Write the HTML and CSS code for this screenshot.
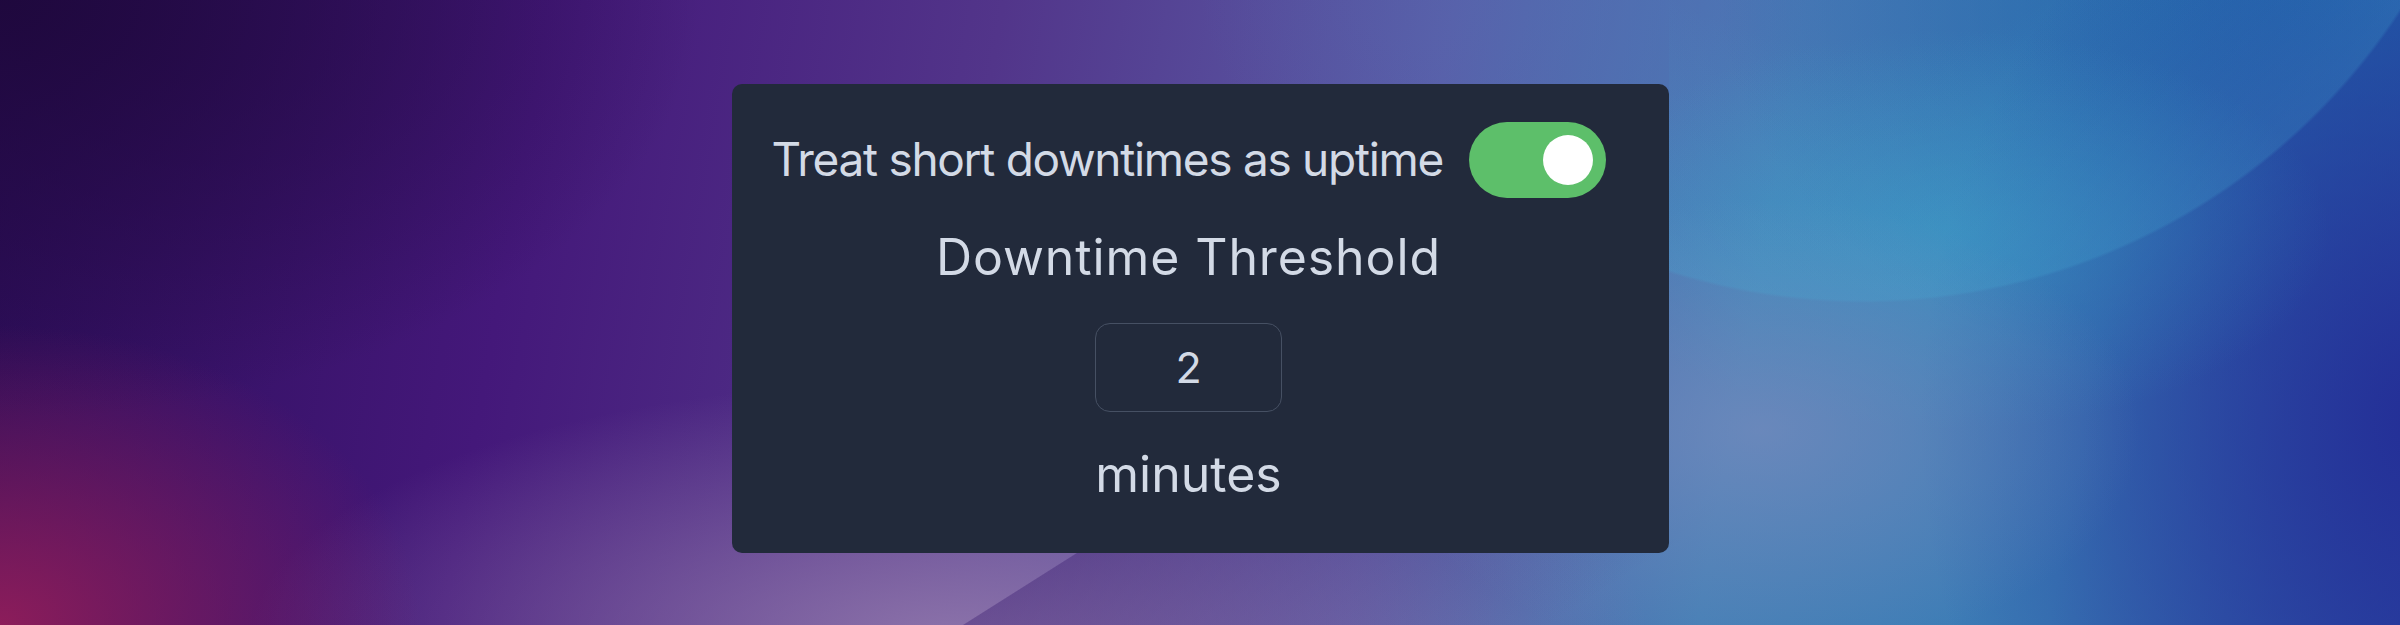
FILE: index.html
```html
<!DOCTYPE html>
<html lang="en">
<head>
<meta charset="utf-8">
<title>Downtime Threshold</title>
<link rel="stylesheet" href="styles.css">
</head>
<body>
<div class="card">
  <div class="row">
    <span class="label">Treat short downtimes as uptime</span>
    <div class="toggle on"><div class="knob"></div></div>
  </div>
  <div class="heading">Downtime Threshold</div>
  <div class="input"><span class="value">2</span></div>
  <div class="unit">minutes</div>
</div>
</body>
</html>
```
FILE: styles.css
```css
html, body {
  margin: 0;
  padding: 0;
}
body {
  width: 2400px;
  height: 625px;
  box-sizing: border-box;
  padding-top: 84px;
  display: flex;
  justify-content: center;
  align-items: flex-start;
  font-family: Inter, "Noto Sans", sans-serif;
  overflow: hidden;
  background-color: #4a3a90;
  background-repeat: no-repeat;
  background-size: 800px 90px, 731px 625px, 100% 100%, 100% 100%, 100% 100%, 100% 100%, 100% 100%, 100% 100%, 100% 100%, 100% 100%, 100% 100%;
  background-position: 900px 540px, 1669px 0, 0 0, 0 0, 0 0, 0 0, 0 0, 0 0, 0 0, 0 0, 0 0;
  background-image:
    linear-gradient(147.7deg, rgba(55, 25, 110, 0) 0, rgba(55, 25, 110, 0) 105px, rgba(55, 25, 110, 0.38) 106px, rgba(55, 25, 110, 0) 420px),
    radial-gradient(circle 643px at 194px -340px, rgba(70, 175, 215, 0) 60%, rgba(70, 175, 215, 0.22) 99.5%, rgba(70, 175, 215, 0) 100%),
    radial-gradient(ellipse 420px 300px at 0px 625px, rgba(150, 30, 90, 0.9), rgba(150, 30, 90, 0) 100%),
    radial-gradient(ellipse 700px 260px at 950px 640px, rgba(150, 125, 175, 0.85), rgba(150, 125, 175, 0) 100%),
    radial-gradient(ellipse 380px 230px at 1760px 430px, rgba(125, 140, 190, 0.65), rgba(125, 140, 190, 0) 100%),
    radial-gradient(ellipse 380px 200px at 1950px 230px, rgba(60, 160, 200, 0.45), rgba(60, 160, 200, 0) 100%),
    radial-gradient(ellipse 500px 620px at 2420px 420px, rgba(35, 45, 150, 0.95), rgba(35, 45, 150, 0) 100%),
    radial-gradient(ellipse 700px 420px at 0px 0px, rgba(30, 8, 60, 0.95), rgba(30, 8, 60, 0) 100%),
    radial-gradient(ellipse 600px 400px at 2320px 0px, rgba(30, 100, 170, 0.9), rgba(30, 100, 170, 0) 100%),
    radial-gradient(ellipse 500px 260px at 1700px 0px, rgba(80, 110, 180, 0.5), rgba(80, 110, 180, 0) 100%),
    linear-gradient(100deg, #2c0d58 0%, #44187a 22%, #52358a 40%, #5a5ea8 58%, #4680b6 72%, #3a7cb6 86%, #2e50a8 100%);
}
.card {
  width: 937px;
  height: 469px;
  box-sizing: border-box;
  padding: 38px 63px 0 40px;
  background: #222a3b;
  border-radius: 10px;
  display: flex;
  flex-direction: column;
  align-items: center;
  color: #d3dae6;
}
.row {
  align-self: stretch;
  display: flex;
  align-items: center;
  gap: 26px;
}
.label {
  font-size: 46px;
  line-height: 1.2;
  letter-spacing: -1.3px;
  white-space: nowrap;
}
.toggle {
  width: 137px;
  height: 76px;
  border-radius: 38px;
  background: #5dbf6a;
  box-sizing: border-box;
  padding: 13px;
  display: flex;
  justify-content: flex-end;
  align-items: center;
  flex: none;
}
.knob {
  width: 50px;
  height: 50px;
  border-radius: 50%;
  background: #ffffff;
}
.heading {
  margin-top: 29px;
  font-size: 50px;
  line-height: 60px;
  letter-spacing: 0.9px;
  white-space: nowrap;
}
.input {
  margin-top: 36px;
  width: 187px;
  height: 89px;
  box-sizing: border-box;
  border: 1.5px solid #465063;
  border-radius: 15px;
  display: flex;
  align-items: center;
  justify-content: center;
}
.value {
  font-size: 43px;
  line-height: 1;
}
.unit {
  margin-top: 32px;
  font-size: 50px;
  line-height: 60px;
}
```
